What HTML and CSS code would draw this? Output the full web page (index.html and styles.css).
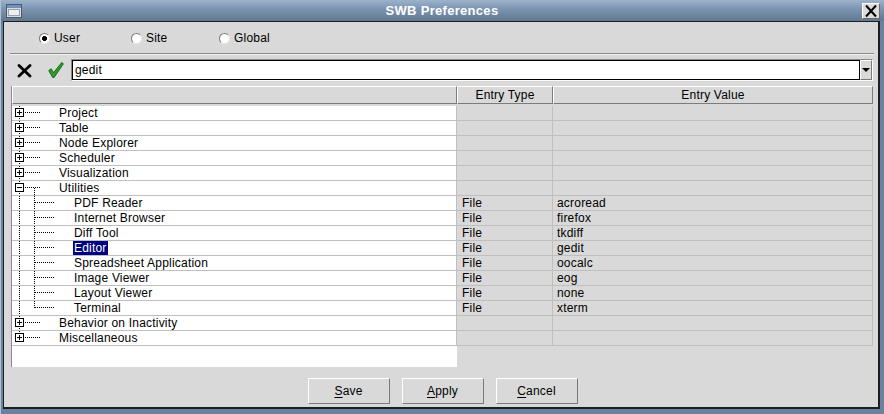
FILE: index.html
```html
<!DOCTYPE html>
<html>
<head>
<meta charset="utf-8">
<title>SWB Preferences</title>
<link rel="stylesheet" href="styles.css">
</head>
<body>
<div class="window">
  <div class="titlebar">
    <svg class="appicon" width="16" height="14" viewBox="0 0 16 14">
      <rect x="0.5" y="0.5" width="15" height="13" fill="#d8dde4" stroke="#4c5a6c"/>
      <rect x="1" y="1" width="14" height="3" fill="#6f93c0"/>
      <rect x="2.5" y="5.5" width="11" height="6" fill="#eef0ee" stroke="#9aa2ac"/>
    </svg>
    <div class="title">SWB Preferences</div>
    <div class="close">
      <svg width="16" height="14" viewBox="0 0 16 14">
        <path d="M3 1.5 L13 12.5 M13 1.5 L3 12.5" stroke="#000" stroke-width="2" fill="none"/>
      </svg>
    </div>
  </div>
  <div class="client">
    <div class="radios">
      <label class="radio r-user"><span class="ind on"></span>User</label>
      <label class="radio r-site"><span class="ind"></span>Site</label>
      <label class="radio"><span class="ind"></span>Global</label>
    </div>
    <div class="sep"></div>
    <div class="toolbar">
      <svg class="ico-x" width="15" height="14" viewBox="0 0 15 14">
        <path d="M2 1.5 L13 12 M13 1.5 L2 12" stroke="#000" stroke-width="2.8" stroke-linecap="round" fill="none"/>
      </svg>
      <svg class="ico-ok" width="16" height="16" viewBox="0 0 16 16">
        <path d="M0.7 8.6 L3.2 6.8 L5.6 10.6 L13.6 0.6 L15.4 1.8 L6.2 15.4 L4.6 15.4 Z" fill="#2c9c2c" stroke="#0f5a0f" stroke-width="0.8" stroke-linejoin="round"/>
      </svg>
      <div class="combo">
        <div class="entry">gedit</div>
        <div class="dropbtn"><span class="tri"></span></div>
      </div>
    </div>
    <div class="table">
      <div class="thead">
        <div class="th"></div>
        <div class="th">Entry Type</div>
        <div class="th">Entry Value</div>
      </div>
      <div class="tbody">
        <div class="row"><div class="c1"><span class="exp first"><span class="box plus"></span></span><span class="hl"></span><span class="lbl">Project</span></div><div class="c2"></div><div class="c3"></div></div>
        <div class="row"><div class="c1"><span class="exp"><span class="box plus"></span></span><span class="hl"></span><span class="lbl">Table</span></div><div class="c2"></div><div class="c3"></div></div>
        <div class="row"><div class="c1"><span class="exp"><span class="box plus"></span></span><span class="hl"></span><span class="lbl">Node Explorer</span></div><div class="c2"></div><div class="c3"></div></div>
        <div class="row"><div class="c1"><span class="exp"><span class="box plus"></span></span><span class="hl"></span><span class="lbl">Scheduler</span></div><div class="c2"></div><div class="c3"></div></div>
        <div class="row"><div class="c1"><span class="exp"><span class="box plus"></span></span><span class="hl"></span><span class="lbl">Visualization</span></div><div class="c2"></div><div class="c3"></div></div>
        <div class="row"><div class="c1"><span class="exp"><span class="box minus"></span></span><span class="hl open"></span><span class="lbl">Utilities</span></div><div class="c2"></div><div class="c3"></div></div>
        <div class="row"><div class="c1"><span class="gut"></span><span class="cg"></span><span class="lbl l2">PDF Reader</span></div><div class="c2">File</div><div class="c3">acroread</div></div>
        <div class="row"><div class="c1"><span class="gut"></span><span class="cg"></span><span class="lbl l2">Internet Browser</span></div><div class="c2">File</div><div class="c3">firefox</div></div>
        <div class="row"><div class="c1"><span class="gut"></span><span class="cg"></span><span class="lbl l2">Diff Tool</span></div><div class="c2">File</div><div class="c3">tkdiff</div></div>
        <div class="row"><div class="c1"><span class="gut"></span><span class="cg"></span><span class="lbl l2 sel">Editor</span></div><div class="c2">File</div><div class="c3">gedit</div></div>
        <div class="row"><div class="c1"><span class="gut"></span><span class="cg"></span><span class="lbl l2">Spreadsheet Application</span></div><div class="c2">File</div><div class="c3">oocalc</div></div>
        <div class="row"><div class="c1"><span class="gut"></span><span class="cg"></span><span class="lbl l2">Image Viewer</span></div><div class="c2">File</div><div class="c3">eog</div></div>
        <div class="row"><div class="c1"><span class="gut"></span><span class="cg"></span><span class="lbl l2">Layout Viewer</span></div><div class="c2">File</div><div class="c3">none</div></div>
        <div class="row"><div class="c1"><span class="gut"></span><span class="cg last"></span><span class="lbl l2">Terminal</span></div><div class="c2">File</div><div class="c3">xterm</div></div>
        <div class="row"><div class="c1"><span class="exp"><span class="box plus"></span></span><span class="hl"></span><span class="lbl">Behavior on Inactivity</span></div><div class="c2"></div><div class="c3"></div></div>
        <div class="row"><div class="c1"><span class="exp last"><span class="box plus"></span></span><span class="hl"></span><span class="lbl">Miscellaneous</span></div><div class="c2"></div><div class="c3"></div></div>
      </div>
      <div class="filler"></div>
    </div>
    <div class="buttons">
      <div class="btn"><u>S</u>ave</div>
      <div class="btn"><u>A</u>pply</div>
      <div class="btn"><u>C</u>ancel</div>
    </div>
  </div>
</div>
</body>
</html>
```
FILE: styles.css
```css
* { box-sizing: border-box; }

html, body {
  margin: 0;
  padding: 0;
}

body {
  width: 884px;
  height: 414px;
  overflow: hidden;
  font-family: "Liberation Sans", Arial, sans-serif;
  font-size: 12px;
  color: #000;
}

.window {
  --vdot: repeating-linear-gradient(to bottom, #000 0 1px, transparent 1px 2px);
  --hdot: repeating-linear-gradient(to right, #000 0 1px, transparent 1px 2px);
  width: 884px;
  height: 414px;
  display: flex;
  flex-direction: column;
  background: #6a82a0;
  border-left: 1px solid #b4c0ce;
}

/* ---------- title bar ---------- */
.titlebar {
  height: 21px;
  display: flex;
  align-items: flex-start;
  background: linear-gradient(#9db3cb 0, #7d96b3 40%, #60778f 100%);
}

.appicon {
  margin: 4px 0 0 5px;
  flex: none;
}

.title {
  flex: 1;
  text-align: center;
  color: #fff;
  font-weight: bold;
  font-size: 13px;
  line-height: 21px;
  letter-spacing: 0.3px;
}

.close {
  width: 18px;
  height: 16px;
  margin: 3px 4px 0 0;
  background: #dcdcdc;
  border: 1px solid;
  border-color: #fff #6a6a6a #6a6a6a #fff;
  display: flex;
  align-items: center;
  justify-content: center;
}

/* ---------- client area ---------- */
.client {
  flex: 1;
  margin: 0 4px 5px 2px;
  border: 1px solid #1e1e1e;
  border-width: 1px 2px 2px 1px;
  background: #d9d9d9;
  display: flex;
  flex-direction: column;
  letter-spacing: 0.2px;
}

.radios {
  display: flex;
  height: 15px;
  margin-top: 9px;
  padding-left: 35px;
}

.radio {
  display: flex;
  align-items: center;
  gap: 4px;
  line-height: 15px;
}

.r-user { width: 92px; }
.r-site { width: 88px; }

.ind {
  width: 11px;
  height: 11px;
  border-radius: 50%;
  border: 1px solid;
  border-color: #7a7a7a #e8e8e8 #e8e8e8 #7a7a7a;
  background: #fff;
}

.ind.on {
  background: radial-gradient(circle, #000 0 2.2px, #fff 2.8px);
}

.sep {
  height: 2px;
  margin: 7px 4px 0 6px;
  border-top: 1px solid #8a8a8a;
  border-bottom: 1px solid #f2f2f2;
}

/* ---------- toolbar ---------- */
.toolbar {
  display: flex;
  align-items: flex-start;
  height: 22px;
  margin-top: 4px;
  padding-left: 13px;
}

.ico-x {
  margin-top: 5px;
  flex: none;
}

.ico-ok {
  margin: 3px 0 0 16px;
  flex: none;
}

.combo {
  flex: 1;
  height: 22px;
  margin: 0 5px 0 7px;
  display: flex;
  border: 1px solid;
  border-color: #8a8a8a #fbfbfb #fbfbfb #8a8a8a;
}

.entry {
  flex: 1;
  background: #fff;
  border: 1px solid #000;
  padding-left: 2px;
  line-height: 18px;
}

.dropbtn {
  width: 12px;
  border: 1px solid;
  border-color: #fff #7a7a7a #7a7a7a #fff;
  background: #d9d9d9;
  display: flex;
  align-items: center;
  justify-content: center;
}

.tri {
  width: 0;
  height: 0;
  border-left: 4px solid transparent;
  border-right: 4px solid transparent;
  border-top: 4px solid #000;
}

/* ---------- tree table ---------- */
.table {
  width: 862px;
  margin: 5px 0 0 7px;
  border-left: 1px solid #8c8c8c;
}

.thead {
  display: grid;
  grid-template-columns: 445px 96px 320px;
  height: 18px;
}

.th {
  border: 1px solid;
  border-color: #fff #7c7c7c #7c7c7c #fff;
  background: #d9d9d9;
  text-align: center;
  line-height: 16px;
}

.tbody {
  padding-top: 2px;
}

.row {
  display: grid;
  grid-template-columns: 445px 96px 320px;
  height: 15px;
}

.row > div {
  border-right: 1px solid #bfbfbf;
  border-bottom: 1px solid #bfbfbf;
  line-height: 14px;
  white-space: nowrap;
  overflow: hidden;
}

.c1 {
  background: #fff;
  display: flex;
  align-items: flex-start;
}

.c2 {
  padding-left: 5px;
}

.c3 {
  padding-left: 4px;
}

.exp {
  width: 9px;
  height: 14px;
  margin-left: 3px;
  flex: none;
  background: var(--vdot) 4px 0 / 1px 100% no-repeat;
}

.exp.last {
  background-size: 1px 2px;
}

.box {
  display: block;
  width: 9px;
  height: 9px;
  margin-top: 2px;
  border: 1px solid #000;
}

.box.plus {
  background:
    linear-gradient(#000, #000) center / 5px 1px no-repeat,
    linear-gradient(#000, #000) center / 1px 5px no-repeat,
    #fff;
}

.box.minus {
  background:
    linear-gradient(#000, #000) center / 5px 1px no-repeat,
    #fff;
}

.hl {
  width: 16px;
  height: 14px;
  flex: none;
  background: var(--hdot) 1px 6px / 15px 1px no-repeat;
}

.hl.open {
  background:
    var(--hdot) 1px 6px / 15px 1px no-repeat,
    var(--vdot) 10px 7px / 1px 7px no-repeat;
}

.gut {
  width: 9px;
  height: 14px;
  margin-left: 3px;
  flex: none;
  background: var(--vdot) 4px 0 / 1px 100% no-repeat;
}

.cg {
  width: 30px;
  height: 14px;
  flex: none;
  background:
    var(--vdot) 10px 0 / 1px 100% no-repeat,
    var(--hdot) 11px 6px / 19px 1px no-repeat;
}

.cg.last {
  background:
    var(--vdot) 10px 0 / 1px 7px no-repeat,
    var(--hdot) 11px 6px / 19px 1px no-repeat;
}

.lbl {
  margin-left: 19px;
  line-height: 14px;
}

.lbl.l2 {
  margin-left: 19px;
  padding: 0 1px;
}

.lbl.sel {
  background: #000080;
  color: #fff;
}

.filler {
  width: 445px;
  height: 21px;
  background: #fff;
}

/* ---------- buttons ---------- */
.buttons {
  display: flex;
  justify-content: center;
  gap: 12px;
  margin-top: 11px;
  padding-left: 3px;
}

.btn {
  width: 82px;
  height: 26px;
  border: 1px solid;
  border-color: #fff #7a7a7a #7a7a7a #fff;
  text-align: center;
  line-height: 24px;
}

.btn u {
  text-decoration-thickness: 1px;
  text-underline-offset: 2px;
}
```
